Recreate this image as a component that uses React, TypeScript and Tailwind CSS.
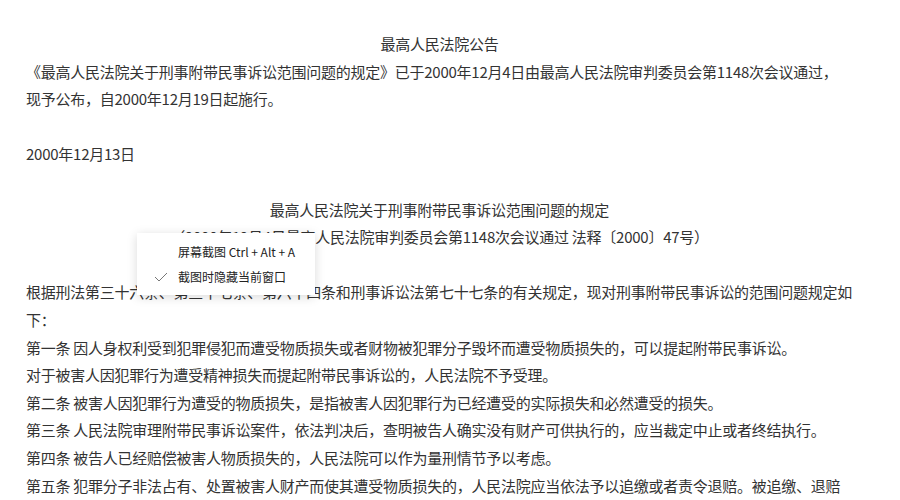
export default function App() {
  const font = { fontFamily: '"Noto Sans CJK SC", "Noto Sans", sans-serif' }
  return (
    <div className="relative min-h-[500px] bg-white overflow-hidden" style={font}>
      <div className="w-[853px] pl-[26px] pt-[30px] text-[15px] tracking-[-0.25px] leading-[27.6px] text-[#333]">
        <p className="text-center">最高人民法院公告</p>
        <p>
          《最高人民法院关于刑事附带民事诉讼范围问题的规定》已于2000年12月4日由最高人民法院审判委员会第1148次会议通过，
          <br />
          现予公布，自2000年12月19日起施行。
        </p>
        <p>&nbsp;</p>
        <p>2000年12月13日</p>
        <p>&nbsp;</p>
        <p className="text-center">最高人民法院关于刑事附带民事诉讼范围问题的规定</p>
        <p className="text-center">
          （2000年12月4日最高人民法院审判委员会第1148次会议通过 法释〔2000〕47号）
        </p>
        <p>&nbsp;</p>
        <p>
          根据刑法第三十六条、第三十七条、第六十四条和刑事诉讼法第七十七条的有关规定，现对刑事附带民事诉讼的范围问题规定如下：
        </p>
        <p>第一条 因人身权利受到犯罪侵犯而遭受物质损失或者财物被犯罪分子毁坏而遭受物质损失的，可以提起附带民事诉讼。</p>
        <p>对于被害人因犯罪行为遭受精神损失而提起附带民事诉讼的，人民法院不予受理。</p>
        <p>第二条 被害人因犯罪行为遭受的物质损失，是指被害人因犯罪行为已经遭受的实际损失和必然遭受的损失。</p>
        <p>第三条 人民法院审理附带民事诉讼案件，依法判决后，查明被告人确实没有财产可供执行的，应当裁定中止或者终结执行。</p>
        <p>第四条 被告人已经赔偿被害人物质损失的，人民法院可以作为量刑情节予以考虑。</p>
        <p>
          第五条 犯罪分子非法占有、处置被害人财产而使其遭受物质损失的，人民法院应当依法予以追缴或者责令退赔。被追缴、退赔的情况，人民法院可以作为量刑情节予以考虑。
        </p>
      </div>

      <div className="absolute left-[137px] top-[233px] w-[178px] h-[62px] bg-white shadow-[0_2px_10px_rgba(0,0,0,0.15)] text-[12px] text-[#222]">
        <div className="flex items-center h-[30px] pt-[8px] pl-[41px]">屏幕截图 Ctrl + Alt + A</div>
        <div className="flex items-center h-[28px] pl-[17px]">
          <svg width="14" height="10" viewBox="0 0 14 10" className="mr-[10px]">
            <path d="M1 5 L5 9 L13 1" fill="none" stroke="#777" strokeWidth="1" />
          </svg>
          截图时隐藏当前窗口
        </div>
      </div>
    </div>
  )
}
